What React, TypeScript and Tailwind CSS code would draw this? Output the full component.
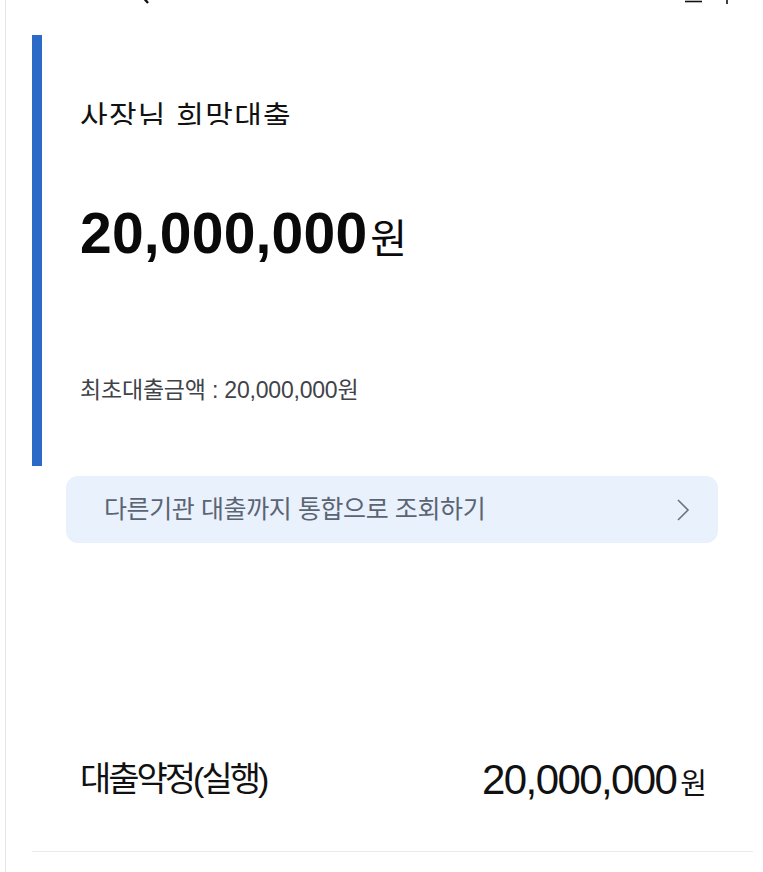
const font = { fontFamily: '"Liberation Sans", "Noto Sans CJK KR", sans-serif' }

const Header = () => {
  return (
    <div className="flex h-[6px] items-start justify-between overflow-hidden">
      <svg width="90" height="6" viewBox="0 0 90 6" className="ml-[66px]">
        <path d="M70 -4 L76 3" stroke="#111" strokeWidth="2.4" fill="none" />
      </svg>
      <svg width="70" height="6" viewBox="0 0 70 6" className="mr-[20px]">
        <path d="M12 1.5 H29" stroke="#111" strokeWidth="1.6" fill="none" />
        <path d="M54 0 V4" stroke="#111" strokeWidth="1.6" fill="none" />
      </svg>
    </div>
  )
}

const App = () => {
  return (
    <div className="min-h-screen bg-white" style={font}>
      <div className="ml-[5px] h-[872px] overflow-hidden border-l border-[#e6e6e6]">
        <Header />
        <section className="ml-[26px] mt-[29px] flex h-[431px] flex-col border-l-[10px] border-[#2b6bc7] pl-[38px]">
          {/* title is clipped at the bottom like the source screen */}
          <div className="mt-[64px] h-[26px] overflow-hidden text-[30px] leading-[36px] tracking-[1.3px] text-[#111]">
            사장님 희망대출
          </div>
          <div className="mt-[78px] flex items-baseline text-[#0a0a0a]">
            <span className="text-[57px] font-bold leading-[60px] tracking-[0.2px]">20,000,000</span>
            <span className="ml-[3px] text-[40px] leading-[40px]">원</span>
          </div>
          <div className="mt-[113px] text-[23px] leading-[28px] tracking-[-0.2px] text-[#3f4349]">
            최초대출금액 : 20,000,000원
          </div>
        </section>
        <button className="ml-[60px] mt-[10px] flex h-[67px] w-[652px] items-center justify-between rounded-[12px] bg-[#e9f1fd] pl-[38px] pr-[28px] text-left">
          <span className="text-[25px] tracking-[-0.4px] text-[#5b6473]">다른기관 대출까지 통합으로 조회하기</span>
          <svg width="14" height="24" viewBox="0 0 14 24" fill="none">
            <path d="M2 2 L12 12 L2 22" stroke="#6b7280" strokeWidth="1.6" />
          </svg>
        </button>
        <div className="ml-[26px] mt-[205px] mr-[10px] flex items-center justify-between border-b border-[#e9e9e9] pb-[40px] pl-[48px] pr-[46px]">
          <span className="text-[34px] tracking-[-3px] text-[#111]">대출약정(실행)</span>
          <div className="flex items-baseline text-[#111]">
            <span className="text-[42px] tracking-[-1.6px]">20,000,000</span>
            <span className="ml-[4px] text-[29px]">원</span>
          </div>
        </div>
      </div>
    </div>
  )
}

export default App
